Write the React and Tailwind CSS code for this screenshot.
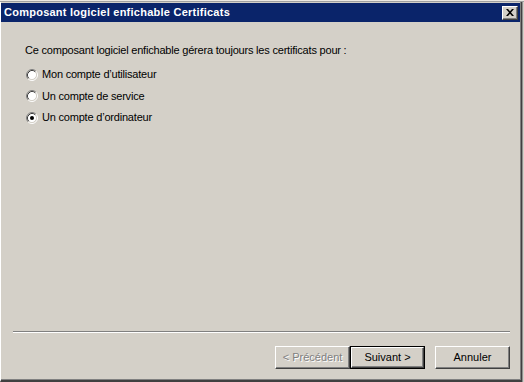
import React from "react";

function Radio({ checked }) {
  return (
    <svg width="12" height="12" viewBox="0 0 12 12" className="shrink-0">
      <circle cx="6" cy="6" r="4.5" fill="#ffffff" />
      <path d="M2.11 9.89 A5.5 5.5 0 0 1 9.89 2.11" fill="none" stroke="#808080" strokeWidth="1" />
      <path d="M9.89 2.11 A5.5 5.5 0 0 1 2.11 9.89" fill="none" stroke="#ffffff" strokeWidth="1" />
      <path d="M2.82 9.18 A4.5 4.5 0 0 1 9.18 2.82" fill="none" stroke="#404040" strokeWidth="1" />
      <path d="M9.18 2.82 A4.5 4.5 0 0 1 2.82 9.18" fill="none" stroke="#d4d0c8" strokeWidth="1" />
      {checked && <circle cx="6" cy="6" r="2" fill="#000000" />}
    </svg>
  );
}

function Button({ children, disabled, isDefault }) {
  const inner = (
    <div className="w-full h-full flex items-center justify-center border border-t-white border-l-white border-r-[#404040] border-b-[#404040] shadow-[inset_-1px_-1px_0_#808080]">
      <span
        className={
          disabled
            ? "text-[#808080] [text-shadow:1px_1px_0_#ffffff]"
            : "text-black"
        }
      >
        {children}
      </span>
    </div>
  );
  return (
    <div
      className={`w-[75px] h-[23px] bg-[#d4d0c8] ${
        isDefault ? "border border-black" : ""
      }`}
    >
      {inner}
    </div>
  );
}

export default function App() {
  const options = [
    { label: "Mon compte d’utilisateur", checked: false },
    { label: "Un compte de service", checked: false },
    { label: "Un compte d’ordinateur", checked: true },
  ];

  return (
    <div className="w-[524px] h-[382px] bg-[#d4d0c8] flex flex-col overflow-hidden font-['Liberation_Sans',Arial,sans-serif] text-[11px] text-black">
      {/* window behind, top edge */}
      <div className="h-[2px] shrink-0 bg-[#ece9e2] border-b border-[#a0a0a0]" />

      <div className="flex flex-1 min-h-0">
        <div className="w-[522px] flex flex-col border-l border-white border-r border-r-[#404040] border-b-2 border-b-[#404040]">
          <div className="flex flex-col flex-1 min-h-0 pt-[1px] border-r border-r-[#808080] border-b border-b-[#808080]">
            {/* title bar */}
            <div className="h-[19px] shrink-0 bg-[#0a246a] flex items-center pl-[3px] pr-[2px]">
              <span className="text-white font-bold text-[11px] leading-none tracking-[0.25px]">
                Composant logiciel enfichable Certificats
              </span>
              <div className="ml-auto w-[16px] h-[14px] bg-[#d4d0c8] flex items-center justify-center border border-t-white border-l-white border-r-[#404040] border-b-[#404040] shadow-[inset_-1px_-1px_0_#808080]">
                <svg width="8" height="7" viewBox="0 0 8 7">
                  <path
                    d="M0 0h2l2 2.3 2-2.3h2l-3 3.5 3 3.5h-2l-2-2.3-2 2.3h-2l3-3.5z"
                    fill="#000000"
                  />
                </svg>
              </div>
            </div>

            {/* body */}
            <div className="flex flex-col flex-1 min-h-0 pl-[24px] pt-[22px] tracking-[-0.2px]">
              <div className="h-[13px] leading-[13px]">
                Ce composant logiciel enfichable gérera toujours les certificats pour :
              </div>
              <div className="flex flex-col gap-[8.5px] mt-[11px] pl-[1px]">
                {options.map((o) => (
                  <div key={o.label} className="flex items-center gap-[4px] h-[13px]">
                    <Radio checked={o.checked} />
                    <span className="leading-[13px]">{o.label}</span>
                  </div>
                ))}
              </div>
            </div>

            {/* footer */}
            <div className="shrink-0 pl-[12px] pr-[10px] pb-[10px]">
              <div className="h-[2px] border-t border-[#808080] border-b border-b-white" />
              <div className="flex justify-end mt-[13px]">
                <Button disabled>&lt; Précédent</Button>
                <Button isDefault>Suivant &gt;</Button>
                <div className="w-[10px]" />
                <Button>Annuler</Button>
              </div>
            </div>
          </div>
        </div>
        <div className="flex-1 border-l border-[#909090]" />
      </div>
    </div>
  );
}
